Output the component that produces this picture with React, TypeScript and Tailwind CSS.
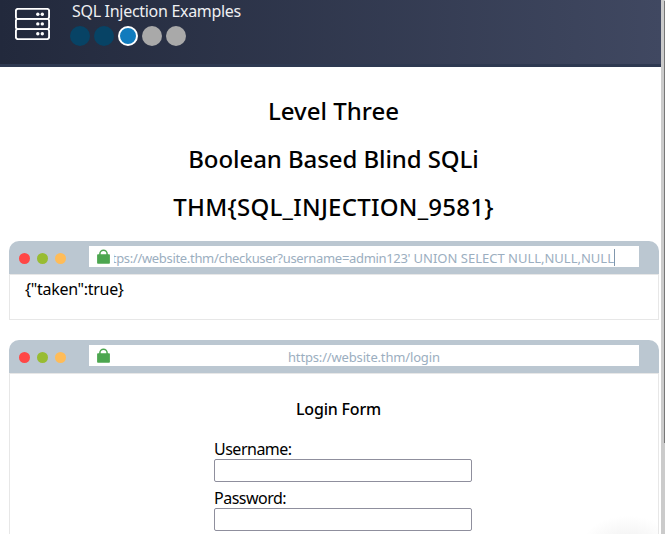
import React from "react";

function Header() {
  return (
    <header className="flex h-[67px] items-start border-b-[3px] border-[#2e3951] bg-linear-to-r from-[#22293c] to-[#404861] pl-[15px]">
      <svg className="mt-[8px] h-[32px] w-[35px] shrink-0" viewBox="0 0 35 32" fill="none" stroke="#fff" strokeWidth="1.9">
        <rect x="0.9" y="0.9" width="33.2" height="10" rx="2" />
        <rect x="0.9" y="10.9" width="33.2" height="10.2" rx="2" />
        <rect x="0.9" y="21.1" width="33.2" height="10" rx="2" />
        <g fill="#fff" stroke="none">
          <circle cx="22.8" cy="6.3" r="1.7" />
          <circle cx="27.3" cy="6.3" r="1.7" />
          <circle cx="22.8" cy="15.9" r="1.7" />
          <circle cx="27.3" cy="15.9" r="1.7" />
          <circle cx="22.8" cy="25.8" r="1.7" />
          <circle cx="27.3" cy="25.8" r="1.7" />
        </g>
      </svg>
      <div className="ml-[20px]">
        <div className="ml-[2px] h-[26px] text-[16px] leading-[23px] tracking-[-0.3px] whitespace-nowrap text-[#eeeff2]">SQL Injection Examples</div>
        <div className="flex gap-1">
          <span className="size-5 rounded-full bg-[#074365]" />
          <span className="size-5 rounded-full bg-[#074365]" />
          <span className="size-5 rounded-full border-2 border-white bg-[#107bbd]" />
          <span className="size-5 rounded-full bg-[#a9a9a9]" />
          <span className="size-5 rounded-full bg-[#a9a9a9]" />
        </div>
      </div>
    </header>
  );
}

function Lock() {
  return (
    <svg className="mt-[3px] ml-[8px] h-[15px] w-[13px] shrink-0" viewBox="0 0 13 15">
      <path d="M2.9 6.5V4.8a3.6 3.6 0 0 1 7.2 0V6.5" fill="none" stroke="#4ca64f" strokeWidth="1.5" />
      <rect x="0.1" y="5.2" width="12.8" height="9.6" rx="0.8" fill="#4ca64f" />
    </svg>
  );
}

function BrowserBar({ children }: { children: React.ReactNode }) {
  return (
    <div className="flex h-[33px] items-start rounded-t-[10px] bg-[#bbc7d1] pl-[10px]">
      <div className="mt-[12px] flex gap-[7px]">
        <span className="size-[11px] rounded-full bg-[#ff4746]" />
        <span className="size-[11px] rounded-full bg-[#98bc32]" />
        <span className="size-[11px] rounded-full bg-[#ffbc58]" />
      </div>
      <div className="mt-[5px] ml-[23px] flex h-[21px] w-[550px] overflow-hidden bg-white text-[13px] leading-[24px] whitespace-nowrap text-[#9baec0]">
        <Lock />
        {children}
      </div>
    </div>
  );
}

function Field({ label, type }: { label: string; type: string }) {
  return (
    <label className="mb-[4px] block h-[45px]">
      <span className="block h-[21px] text-[16px] leading-[23px] tracking-[-0.5px]">{label}</span>
      <input type={type} className="block h-[23px] w-[258px] rounded-[2px] border border-[#8f8f9d] bg-white" />
    </label>
  );
}

export default function App() {
  return (
    <div className="flex h-[534px] w-[665px] overflow-hidden bg-white font-['Noto_Sans',sans-serif] text-black">
      <main className="w-[661px] shrink-0">
        <Header />
        <div className="flex flex-col items-center pt-[20px] pl-[6px] text-[24px] leading-[48px] font-medium whitespace-nowrap">
          <h1 className="h-[48px]">Level Three</h1>
          <h2 className="h-[48px] tracking-[-0.08px]">Boolean Based Blind SQLi</h2>
          <h2 className="h-[48px] tracking-[0.25px]">THM&#123;SQL_INJECTION_9581&#125;</h2>
        </div>

        <section className="mt-[10px] ml-[9px] w-[650px]">
          <BrowserBar>
            <div className="ml-[4px] flex w-[501px] justify-end overflow-hidden">
              <span className="tracking-[-0.32px]">https://website.thm/checkuser?username=admin123&apos;</span>
              <span className="whitespace-pre"> UNION SELECT NULL,NULL,NULL</span>
              <span className="mt-[3px] h-[17px] w-px shrink-0 bg-[#8097ad]" />
            </div>
          </BrowserBar>
          <div className="h-[46px] border border-[#e7e7e7] pl-[15px] text-[16px] leading-[28px] tracking-[-0.3px]">&#123;&quot;taken&quot;:true&#125;</div>
        </section>

        <section className="mt-[20px] ml-[9px] w-[650px]">
          <BrowserBar>
            <span className="ml-[178px] tracking-[-0.16px]">https://website.thm/login</span>
          </BrowserBar>
          <div className="h-[180px] border border-[#e7e7e7] bg-[radial-gradient(ellipse_46px_28px_at_618px_170px,#f0f0f0,#ffffff)]">
            <h3 className="ml-[286px] pt-[24px] text-[16px] leading-[22px] font-medium tracking-[-0.2px]">Login Form</h3>
            <form className="mt-[18px] ml-[204px]">
              <Field label="Username:" type="text" />
              <Field label="Password:" type="password" />
            </form>
          </div>
        </section>
      </main>
      <aside className="flex w-[4px] shrink-0 justify-end bg-[#cbcbcb]">
        <div className="mt-px h-[442px] w-px bg-[#777777]" />
      </aside>
    </div>
  );
}
